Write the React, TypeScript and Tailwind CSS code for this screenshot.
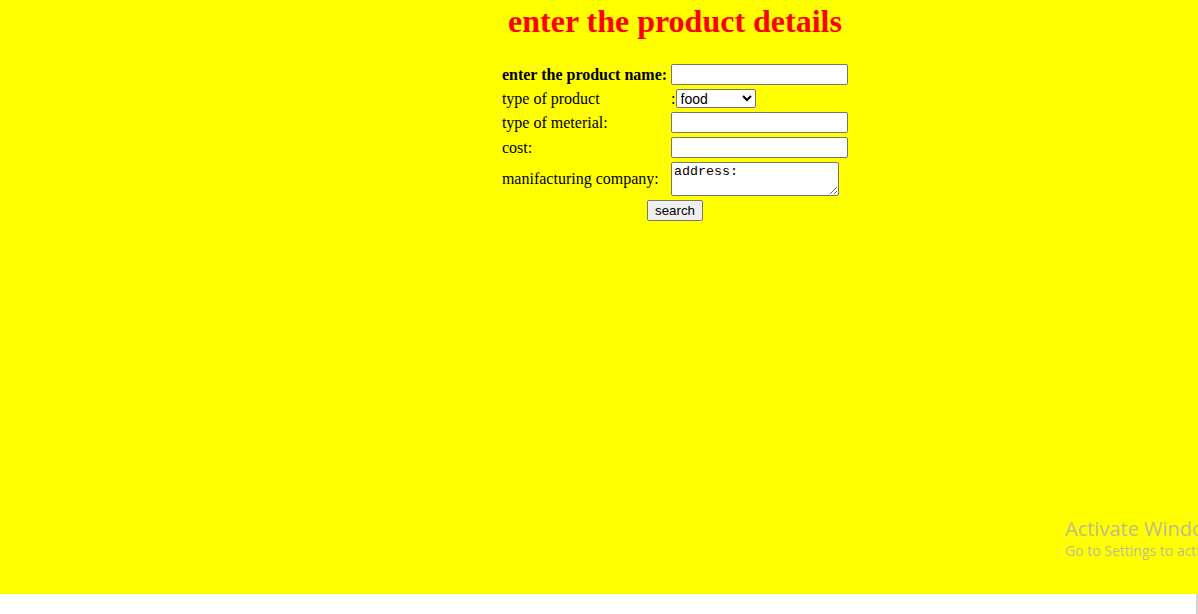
import React, { useState } from 'react';

const serif = { fontFamily: '"Liberation Serif", "Times New Roman", serif' };

export default function App() {
  const [name, setName] = useState('');
  const [type, setType] = useState('food');
  const [material, setMaterial] = useState('');
  const [cost, setCost] = useState('');
  const [company, setCompany] = useState('address:');

  const inputClass =
    'w-[177px] h-[21px] bg-white border border-[#767676] rounded-[2px] px-[2px] text-[13.33px] leading-[normal] font-["Liberation_Sans",Arial,sans-serif]';

  return (
    <div className="w-full h-[614px] bg-white overflow-hidden">
      <div className="relative h-[594px] bg-[#ffff00] overflow-hidden">
        <div className="w-[1350px] flex flex-col items-center" style={serif}>
          <h1 className="mt-[3px] text-[32px] font-bold text-[#ff0000] leading-[37px] font-['Liberation_Serif',serif]">
            enter the product details
          </h1>

          <form className="mt-[21px]" onSubmit={(e) => e.preventDefault()}>
            <table className="border-separate border-spacing-[2px] text-[16px] leading-[normal] text-black font-['Liberation_Serif',serif]">
              <tbody>
                <tr>
                  <td className="p-[1px] font-bold">enter the product name:</td>
                  <td className="p-[1px]">
                    <input className={inputClass} value={name} onChange={(e) => setName(e.target.value)} />
                  </td>
                </tr>
                <tr>
                  <td className="p-[1px]">type of product</td>
                  <td className="p-[1px]">
                    :
                    <select
                      value={type}
                      onChange={(e) => setType(e.target.value)}
                      className="w-[80px] h-[19px] bg-white border border-[#767676] rounded-[2px] text-[14px] leading-[normal] font-['Liberation_Sans',Arial,sans-serif]"
                    >
                      <option value="food">food</option>
                      <option value="cloth">cloth</option>
                      <option value="electronics">electronics</option>
                    </select>
                  </td>
                </tr>
                <tr>
                  <td className="p-[1px]">type of meterial:</td>
                  <td className="p-[1px]">
                    <input className={inputClass} value={material} onChange={(e) => setMaterial(e.target.value)} />
                  </td>
                </tr>
                <tr>
                  <td className="p-[1px]">cost:</td>
                  <td className="p-[1px]">
                    <input className={inputClass} value={cost} onChange={(e) => setCost(e.target.value)} />
                  </td>
                </tr>
                <tr>
                  <td className="p-[1px]">manifacturing company:</td>
                  <td className="p-[1px]">
                    <textarea
                      value={company}
                      onChange={(e) => setCompany(e.target.value)}
                      className="block w-[168px] h-[34px] bg-white border border-[#767676] rounded-[2px] px-[2px] py-[1px] text-[13.33px] leading-[15px] font-['Liberation_Mono',monospace] resize"
                    />
                  </td>
                </tr>
                <tr>
                  <td colSpan={2} className="p-[1px] text-center">
                    <button
                      type="submit"
                      className="h-[21px] px-[7px] bg-[#efefef] border border-[#767676] rounded-[2px] text-[13.33px] leading-[normal] text-black font-['Liberation_Sans',Arial,sans-serif]"
                    >
                      search
                    </button>
                  </td>
                </tr>
              </tbody>
            </table>
          </form>
        </div>

        <div className="absolute left-[1065px] top-[516px] whitespace-nowrap text-[#c0bc8c] font-['Open_Sans','Noto_Sans',sans-serif]">
          <div className="text-[20px] leading-[26px]">Activate Windows</div>
          <div className="text-[14px] leading-[18px]">Go to Settings to activate Windows.</div>
        </div>
      </div>
      <div className="flex justify-end h-[20px]">
        <div className="w-[2px] h-full bg-[#d4d4d4]" />
      </div>
    </div>
  );
}
